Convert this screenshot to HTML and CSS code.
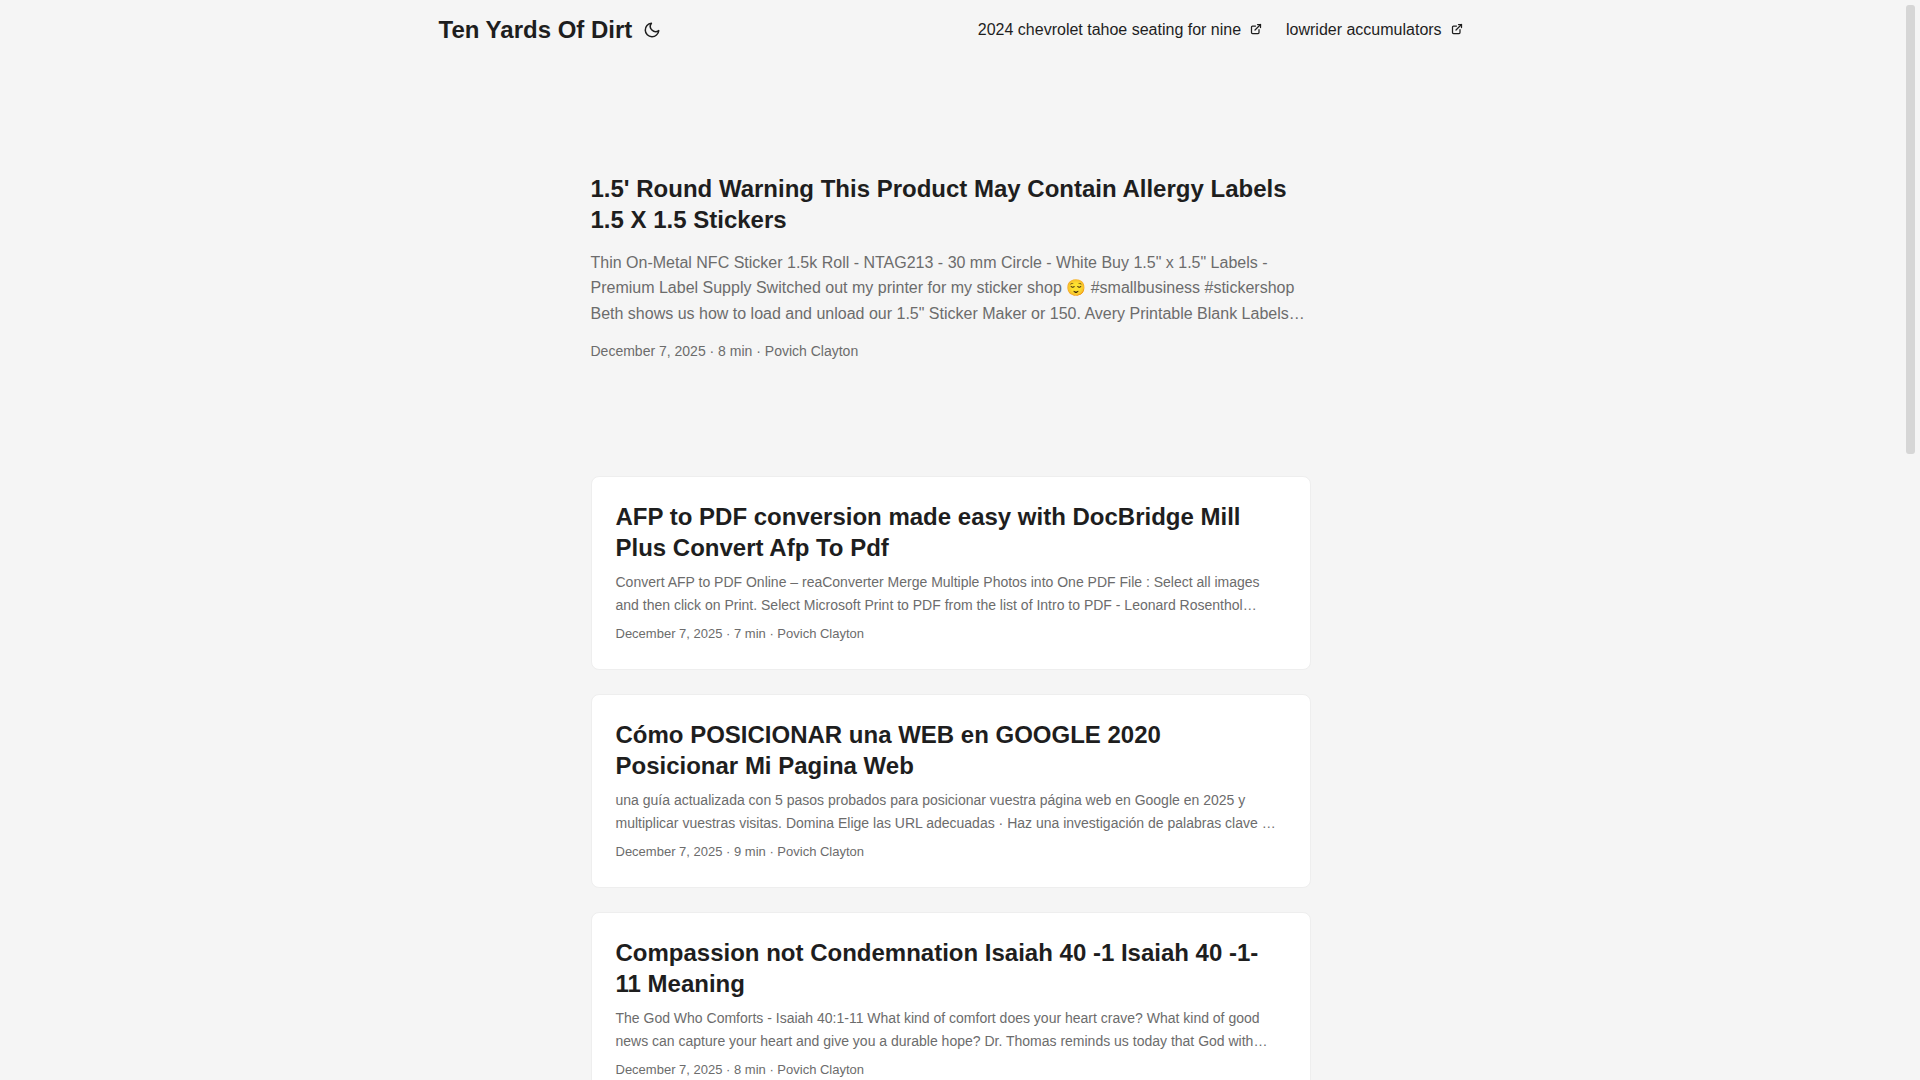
FILE: index.html
```html
<!DOCTYPE html>
<html lang="en">
<head>
  <meta charset="UTF-8" />
  <meta name="viewport" content="width=device-width, initial-scale=1" />
  <title>Ten Yards Of Dirt</title>
  <link rel="stylesheet" href="styles.css">
</head>
<body>
  <header class="header">
    <nav class="nav">
      <div class="logo">
        <a href="#">Ten Yards Of Dirt</a>
        <button class="theme-toggle" type="button" aria-label="Toggle theme">
          <svg width="24" height="18" viewBox="0 0 24 24" fill="none" stroke="currentColor" stroke-width="2" stroke-linecap="round" stroke-linejoin="round">
            <path d="M21 12.79A9 9 0 1 1 11.21 3 7 7 0 0 0 21 12.79z"/>
          </svg>
        </button>
      </div>
      <ul class="menu">
        <li>
          <a href="#">2024 chevrolet tahoe seating for nine&nbsp;
            <svg width="12" height="12" viewBox="0 0 24 24" fill="none" stroke="currentColor" stroke-width="2.5" stroke-linecap="round" stroke-linejoin="round">
              <path d="M18 13v6a2 2 0 0 1-2 2H5a2 2 0 0 1-2-2V8a2 2 0 0 1 2-2h6"/>
              <path d="M15 3h6v6"/>
              <path d="M10 14L21 3"/>
            </svg>
          </a>
        </li>
        <li>
          <a href="#">lowrider accumulators&nbsp;
            <svg width="12" height="12" viewBox="0 0 24 24" fill="none" stroke="currentColor" stroke-width="2.5" stroke-linecap="round" stroke-linejoin="round">
              <path d="M18 13v6a2 2 0 0 1-2 2H5a2 2 0 0 1-2-2V8a2 2 0 0 1 2-2h6"/>
              <path d="M15 3h6v6"/>
              <path d="M10 14L21 3"/>
            </svg>
          </a>
        </li>
      </ul>
    </nav>
  </header>

  <main class="main">
    <article class="first-entry">
      <h2><a href="#">1.5' Round Warning This Product May Contain Allergy Labels 1.5 X 1.5 Stickers</a></h2>
      <p class="entry-content">Thin On-Metal NFC Sticker 1.5k Roll - NTAG213 - 30 mm Circle - White Buy 1.5" x 1.5" Labels - Premium Label Supply Switched out my printer for my sticker shop 😌 #smallbusiness #stickershop Beth shows us how to load and unload our 1.5" Sticker Maker or 150. Avery Printable Blank Labels…</p>
      <footer class="entry-footer">December 7, 2025 · 8 min · Povich Clayton</footer>
    </article>

    <article class="post-entry">
      <h2><a href="#">AFP to PDF conversion made easy with DocBridge Mill Plus Convert Afp To Pdf</a></h2>
      <p class="entry-content">Convert AFP to PDF Online – reaConverter Merge Multiple Photos into One PDF File : Select all images and then click on Print. Select Microsoft Print to PDF from the list of Intro to PDF - Leonard Rosenthol…</p>
      <footer class="entry-footer">December 7, 2025 · 7 min · Povich Clayton</footer>
    </article>

    <article class="post-entry">
      <h2><a href="#">Cómo POSICIONAR una WEB en GOOGLE 2020 Posicionar Mi Pagina Web</a></h2>
      <p class="entry-content">una guía actualizada con 5 pasos probados para posicionar vuestra página web en Google en 2025 y multiplicar vuestras visitas. Domina Elige las URL adecuadas · Haz una investigación de palabras clave …</p>
      <footer class="entry-footer">December 7, 2025 · 9 min · Povich Clayton</footer>
    </article>

    <article class="post-entry">
      <h2><a href="#">Compassion not Condemnation Isaiah 40 -1 Isaiah 40 -1-<br>11 Meaning</a></h2>
      <p class="entry-content">The God Who Comforts - Isaiah 40:1-11 What kind of comfort does your heart crave? What kind of good news can capture your heart and give you a durable hope? Dr. Thomas reminds us today that God with…</p>
      <footer class="entry-footer">December 7, 2025 · 8 min · Povich Clayton</footer>
    </article>
  </main>

  <div class="scrollbar" aria-hidden="true">
    <div class="scrollbar-thumb"></div>
  </div>
</body>
</html>
```

FILE: styles.css
```css
:root {
  --gap: 24px;
  --radius: 8px;
  --scrollbar: 19px;
  --theme: rgb(245, 245, 245);
  --entry: rgb(255, 255, 255);
  --primary: rgb(30, 30, 30);
  --secondary: rgb(108, 108, 108);
  --tertiary: rgb(214, 214, 214);
  --border: rgb(238, 238, 238);
}

* {
  box-sizing: border-box;
  margin: 0;
  padding: 0;
}

body {
  height: 100vh;
  padding-right: var(--scrollbar);
  overflow: hidden;
  background: var(--theme);
  color: var(--primary);
  font-family: "Liberation Sans", Arial, sans-serif;
  font-size: 16px;
  line-height: 1.6;
}

a {
  color: inherit;
  text-decoration: none;
}

.nav {
  display: flex;
  flex-wrap: wrap;
  justify-content: space-between;
  max-width: 1072px;
  margin: 0 auto;
  padding: 0 var(--gap);
  line-height: 60px;
}

.logo {
  display: flex;
  align-items: center;
  font-size: 24px;
  font-weight: 700;
}

.theme-toggle {
  display: flex;
  margin: 0 8px;
  border: none;
  background: none;
  color: inherit;
  cursor: pointer;
}

.menu {
  display: flex;
  gap: var(--gap);
  list-style: none;
}

.main {
  max-width: 768px;
  margin: 0 auto;
  padding: var(--gap);
}

h2 {
  font-size: 24px;
  line-height: 1.3;
}

.entry-content {
  margin: 8px 0;
  color: var(--secondary);
  font-size: 14px;
}

.entry-footer {
  color: var(--secondary);
  font-size: 13px;
}

.first-entry {
  display: flex;
  flex-direction: column;
  justify-content: center;
  min-height: 320px;
  margin: var(--gap) 0 calc(var(--gap) * 2);
}

.first-entry .entry-content {
  margin: 14px 0;
  font-size: 16px;
}

.first-entry .entry-footer {
  font-size: 14px;
}

.post-entry {
  margin-bottom: var(--gap);
  padding: var(--gap);
  border: 1px solid var(--border);
  border-radius: var(--radius);
  background: var(--entry);
}

/* scrollbar */
.scrollbar {
  position: fixed;
  top: 0;
  right: 0;
  bottom: 0;
  width: var(--scrollbar);
  padding: 5px;
}

.scrollbar-thumb {
  height: 42%;
  border-radius: 3px;
  background: var(--tertiary);
}
```
